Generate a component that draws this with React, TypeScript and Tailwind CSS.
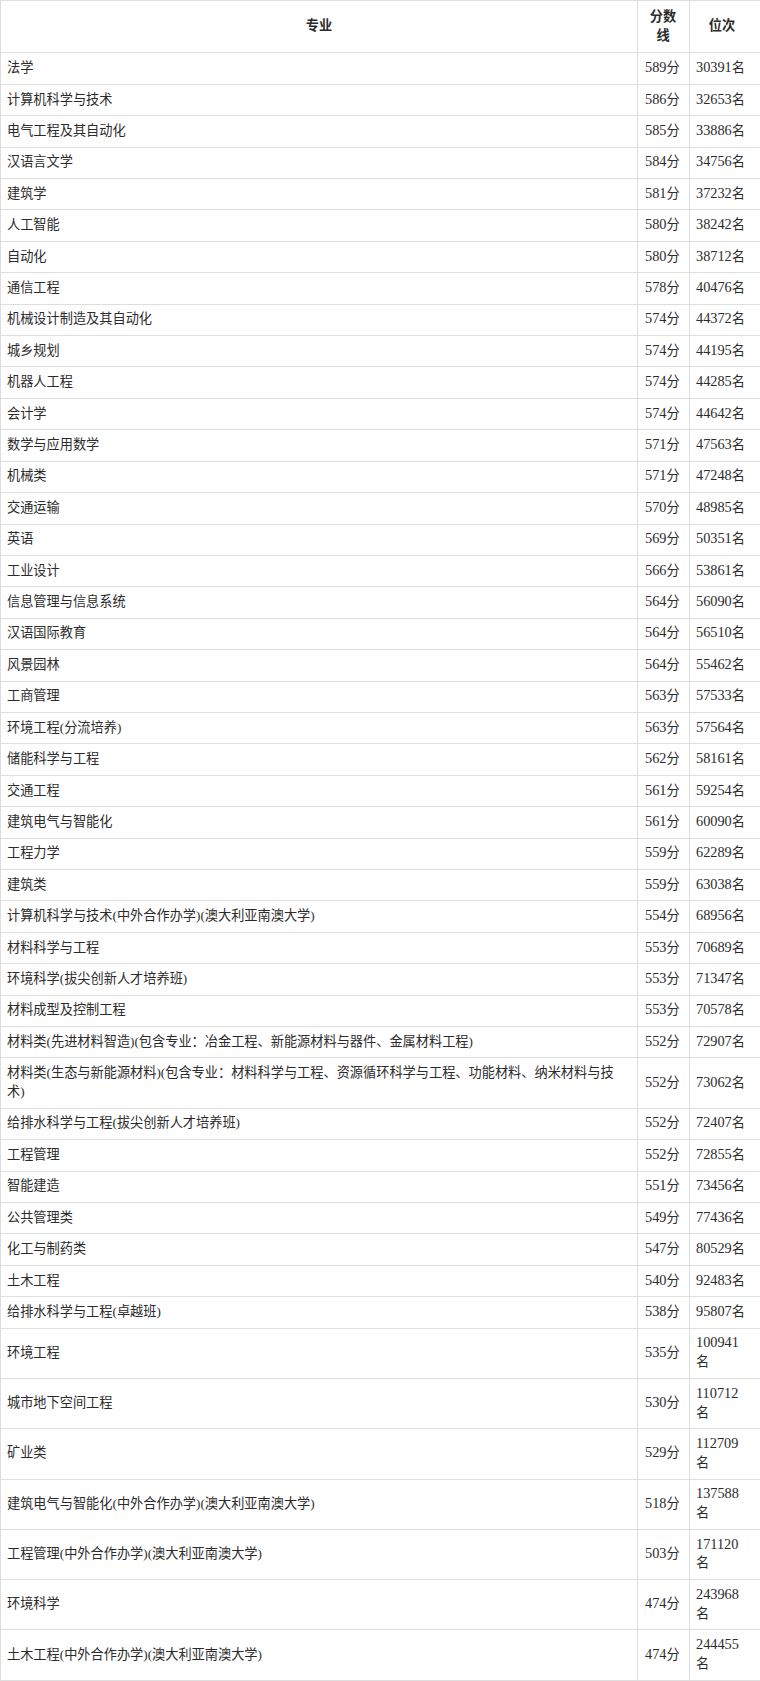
import React from "react";

type Row = [string, string, string];

const rows: Row[] = [
  ["法学", "589分", "30391名"],
  ["计算机科学与技术", "586分", "32653名"],
  ["电气工程及其自动化", "585分", "33886名"],
  ["汉语言文学", "584分", "34756名"],
  ["建筑学", "581分", "37232名"],
  ["人工智能", "580分", "38242名"],
  ["自动化", "580分", "38712名"],
  ["通信工程", "578分", "40476名"],
  ["机械设计制造及其自动化", "574分", "44372名"],
  ["城乡规划", "574分", "44195名"],
  ["机器人工程", "574分", "44285名"],
  ["会计学", "574分", "44642名"],
  ["数学与应用数学", "571分", "47563名"],
  ["机械类", "571分", "47248名"],
  ["交通运输", "570分", "48985名"],
  ["英语", "569分", "50351名"],
  ["工业设计", "566分", "53861名"],
  ["信息管理与信息系统", "564分", "56090名"],
  ["汉语国际教育", "564分", "56510名"],
  ["风景园林", "564分", "55462名"],
  ["工商管理", "563分", "57533名"],
  ["环境工程(分流培养)", "563分", "57564名"],
  ["储能科学与工程", "562分", "58161名"],
  ["交通工程", "561分", "59254名"],
  ["建筑电气与智能化", "561分", "60090名"],
  ["工程力学", "559分", "62289名"],
  ["建筑类", "559分", "63038名"],
  ["计算机科学与技术(中外合作办学)(澳大利亚南澳大学)", "554分", "68956名"],
  ["材料科学与工程", "553分", "70689名"],
  ["环境科学(拔尖创新人才培养班)", "553分", "71347名"],
  ["材料成型及控制工程", "553分", "70578名"],
  ["材料类(先进材料智造)(包含专业：冶金工程、新能源材料与器件、金属材料工程)", "552分", "72907名"],
  ["材料类(生态与新能源材料)(包含专业：材料科学与工程、资源循环科学与工程、功能材料、纳米材料与技术)", "552分", "73062名"],
  ["给排水科学与工程(拔尖创新人才培养班)", "552分", "72407名"],
  ["工程管理", "552分", "72855名"],
  ["智能建造", "551分", "73456名"],
  ["公共管理类", "549分", "77436名"],
  ["化工与制药类", "547分", "80529名"],
  ["土木工程", "540分", "92483名"],
  ["给排水科学与工程(卓越班)", "538分", "95807名"],
  ["环境工程", "535分", "100941名"],
  ["城市地下空间工程", "530分", "110712名"],
  ["矿业类", "529分", "112709名"],
  ["建筑电气与智能化(中外合作办学)(澳大利亚南澳大学)", "518分", "137588名"],
  ["工程管理(中外合作办学)(澳大利亚南澳大学)", "503分", "171120名"],
  ["环境科学", "474分", "243968名"],
  ["土木工程(中外合作办学)(澳大利亚南澳大学)", "474分", "244455名"],
];

function Num({ text }: { text: string }) {
  const digits = text.slice(0, -1);
  const unit = text.slice(-1);
  return (
    <>
      <span className="text-[14.3px] leading-[10px]">{digits}</span>
      {unit}
    </>
  );
}

export default function App() {
  return (
    <div className="bg-white w-[760px]">
      <table
        className="table-fixed border-collapse w-[760px] text-[13.2px] leading-[18.9px] text-[#2b2b2b]"
        style={{ fontFamily: '"Liberation Serif", "Noto Sans CJK SC", serif' }}
      >
        <colgroup>
          <col className="w-[637px]" />
          <col className="w-[52px]" />
          <col className="w-[71px]" />
        </colgroup>
        <thead>
          <tr>
            <th className="border border-[#dddddd] py-[6.8px] px-[6px] text-center align-middle font-bold">
              专业
            </th>
            <th className="border border-[#dddddd] py-[6.8px] pl-[7px] pr-[8px] text-center align-middle font-bold">
              分数线
            </th>
            <th className="border border-[#dddddd] py-[6.8px] pl-[6px] pr-[12px] text-center align-middle font-bold">
              位次
            </th>
          </tr>
        </thead>
        <tbody>
          {rows.map((r, i) => (
            <tr key={i}>
              <td className="border border-[#dddddd] py-[5.75px] pl-[6px] pr-[6px] text-left align-middle">
                {r[0]}
              </td>
              <td className="border border-[#dddddd] py-[5.75px] pl-[7px] pr-[4px] text-left align-middle">
                <Num text={r[1]} />
              </td>
              <td className="border border-[#dddddd] py-[5.75px] pl-[6px] pr-[12px] text-left align-middle">
                <Num text={r[2]} />
              </td>
            </tr>
          ))}
        </tbody>
      </table>
    </div>
  );
}
